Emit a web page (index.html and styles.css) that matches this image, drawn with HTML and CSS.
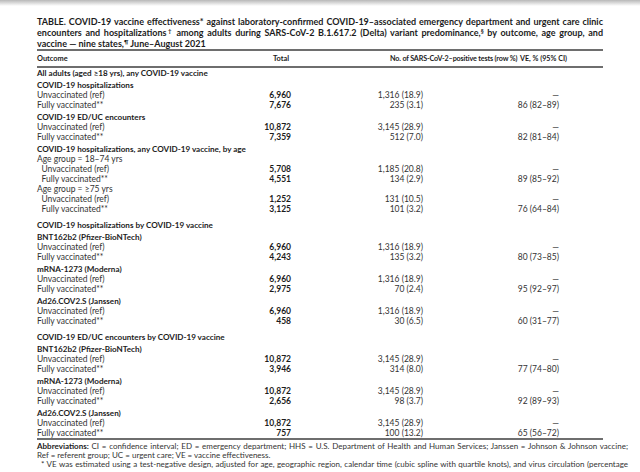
FILE: index.html
```html
<!DOCTYPE html>
<html lang="en">
<head>
<meta charset="utf-8">
<title>COVID-19 vaccine effectiveness table</title>
<link rel="stylesheet" href="styles.css">
</head>
<body>
<div class="page">
  <div class="title">
    <div class="tl j">TABLE. COVID-19 vaccine effectiveness* against laboratory-confirmed COVID-19–associated emergency department and urgent care clinic</div>
    <div class="tl j">encounters and hospitalizations<sup>†</sup> among adults during SARS-CoV-2 B.1.617.2 (Delta) variant predominance,<sup>§</sup> by outcome, age group, and</div>
    <div class="tl">vaccine — nine states,<sup>¶</sup> June–August 2021</div>
  </div>
  <div class="tbl">
    <div class="row head"><span class="c1">Outcome</span><span class="c2">Total</span><span class="c3">No. of SARS-CoV-2–positive tests (row %)</span><span class="c4">VE, % (95% CI)</span></div>
    <div class="row b"><span class="c1">All adults (aged ≥18 yrs), any COVID-19 vaccine</span></div>
    <div class="row b sub"><span class="c1">COVID-19 hospitalizations</span></div>
    <div class="row"><span class="c1">Unvaccinated (ref)</span><span class="c2">6,960</span><span class="c3">1,316 (18.9)</span><span class="c4">—</span></div>
    <div class="row"><span class="c1">Fully vaccinated**</span><span class="c2">7,676</span><span class="c3">235 (3.1)</span><span class="c4">86 (82–89)</span></div>
    <div class="row b sub"><span class="c1">COVID-19 ED/UC encounters</span></div>
    <div class="row"><span class="c1">Unvaccinated (ref)</span><span class="c2">10,872</span><span class="c3">3,145 (28.9)</span><span class="c4">—</span></div>
    <div class="row"><span class="c1">Fully vaccinated**</span><span class="c2">7,359</span><span class="c3">512 (7.0)</span><span class="c4">82 (81–84)</span></div>
    <div class="row b sub"><span class="c1">COVID-19 hospitalizations, any COVID-19 vaccine, by age</span></div>
    <div class="row"><span class="c1">Age group = 18–74 yrs</span></div>
    <div class="row ind"><span class="c1">Unvaccinated (ref)</span><span class="c2">5,708</span><span class="c3">1,185 (20.8)</span><span class="c4">—</span></div>
    <div class="row ind"><span class="c1">Fully vaccinated**</span><span class="c2">4,551</span><span class="c3">134 (2.9)</span><span class="c4">89 (85–92)</span></div>
    <div class="row"><span class="c1">Age group = ≥75 yrs</span></div>
    <div class="row ind"><span class="c1">Unvaccinated (ref)</span><span class="c2">1,252</span><span class="c3">131 (10.5)</span><span class="c4">—</span></div>
    <div class="row ind"><span class="c1">Fully vaccinated**</span><span class="c2">3,125</span><span class="c3">101 (3.2)</span><span class="c4">76 (64–84)</span></div>
    <div class="row b sec"><span class="c1">COVID-19 hospitalizations by COVID-19 vaccine</span></div>
    <div class="row b vac"><span class="c1">BNT162b2 (Pfizer-BioNTech)</span></div>
    <div class="row"><span class="c1">Unvaccinated (ref)</span><span class="c2">6,960</span><span class="c3">1,316 (18.9)</span><span class="c4">—</span></div>
    <div class="row"><span class="c1">Fully vaccinated**</span><span class="c2">4,243</span><span class="c3">135 (3.2)</span><span class="c4">80 (73–85)</span></div>
    <div class="row b vac"><span class="c1">mRNA-1273 (Moderna)</span></div>
    <div class="row"><span class="c1">Unvaccinated (ref)</span><span class="c2">6,960</span><span class="c3">1,316 (18.9)</span><span class="c4">—</span></div>
    <div class="row"><span class="c1">Fully vaccinated**</span><span class="c2">2,975</span><span class="c3">70 (2.4)</span><span class="c4">95 (92–97)</span></div>
    <div class="row b vac"><span class="c1">Ad26.COV2.S (Janssen)</span></div>
    <div class="row"><span class="c1">Unvaccinated (ref)</span><span class="c2">6,960</span><span class="c3">1,316 (18.9)</span><span class="c4">—</span></div>
    <div class="row"><span class="c1">Fully vaccinated**</span><span class="c2">458</span><span class="c3">30 (6.5)</span><span class="c4">60 (31–77)</span></div>
    <div class="row b sec"><span class="c1">COVID-19 ED/UC encounters by COVID-19 vaccine</span></div>
    <div class="row b vac"><span class="c1">BNT162b2 (Pfizer-BioNTech)</span></div>
    <div class="row"><span class="c1">Unvaccinated (ref)</span><span class="c2">10,872</span><span class="c3">3,145 (28.9)</span><span class="c4">—</span></div>
    <div class="row"><span class="c1">Fully vaccinated**</span><span class="c2">3,946</span><span class="c3">314 (8.0)</span><span class="c4">77 (74–80)</span></div>
    <div class="row b vac"><span class="c1">mRNA-1273 (Moderna)</span></div>
    <div class="row"><span class="c1">Unvaccinated (ref)</span><span class="c2">10,872</span><span class="c3">3,145 (28.9)</span><span class="c4">—</span></div>
    <div class="row"><span class="c1">Fully vaccinated**</span><span class="c2">2,656</span><span class="c3">98 (3.7)</span><span class="c4">92 (89–93)</span></div>
    <div class="row b vac"><span class="c1">Ad26.COV2.S (Janssen)</span></div>
    <div class="row"><span class="c1">Unvaccinated (ref)</span><span class="c2">10,872</span><span class="c3">3,145 (28.9)</span><span class="c4">—</span></div>
    <div class="row"><span class="c1">Fully vaccinated**</span><span class="c2">757</span><span class="c3">100 (13.2)</span><span class="c4">65 (56–72)</span></div>
  </div>
  <div class="foot">
    <div class="fl j"><b>Abbreviations:</b> CI = confidence interval; ED = emergency department; HHS = U.S. Department of Health and Human Services; Janssen = Johnson &amp; Johnson vaccine;</div>
    <div class="fl">Ref = referent group; UC = urgent care; VE = vaccine effectiveness.</div>
    <div class="fl j fn">* VE was estimated using a test-negative design, adjusted for age, geographic region, calendar time (cubic spline with quartile knots), and virus circulation (percentage</div>
  </div>
</div>
</body>
</html>
```

FILE: styles.css
```css
html, body {
  margin: 0;
  padding: 0;
}
body {
  background: #ffffff linear-gradient(#b8b8b8, #ffffff 6px) no-repeat;
  font-family: Lato, "Liberation Sans", sans-serif;
  color: #333333;
}
.page {
  padding: 16px 0 0 37px;
}
.title {
  width: 566px;
  font-weight: 700;
  font-size: 9px;
  line-height: 11px;
  color: #1c1c1c;
}
.tl.j {
  text-align: justify;
  text-align-last: justify;
}
.tl sup {
  font-size: 6px;
  line-height: 0;
  vertical-align: 3px;
}
.tbl {
  width: 566px;
  border-top: 2px solid #6e6e6e;
  border-bottom: 2px solid #6e6e6e;
}
.row {
  display: grid;
  grid-template-columns: 203px 51px 132px 136px 1fr;
  font-size: 8.5px;
  line-height: 10px;
  white-space: nowrap;
}
.row .c2,
.row .c3,
.row .c4 {
  text-align: right;
}
.row .c2 {
  font-weight: 700;
  color: #1c1c1c;
}
.row.head {
  padding: 3px 0 2px;
  border-bottom: 2px solid #6e6e6e;
  font-weight: 700;
  font-size: 7.2px;
  color: #1c1c1c;
}
.row.head .c1 {
  font-size: 7.4px;
}
.row.head .c2 {
  padding-right: 2px;
  font-size: 7.4px;
}
.row.head .c3 {
  text-align: left;
  padding-left: 99px;
  letter-spacing: -0.15px;
}
.row.head .c4 {
  text-align: left;
  padding-left: 97px;
}
.row.b {
  font-weight: 700;
  font-size: 8.1px;
  color: #1c1c1c;
}
.row.sub {
  padding-top: 2px;
}
.row.sec {
  padding-top: 6px;
}
.row.vac {
  padding-top: 2px;
}
.row.ind .c1 {
  padding-left: 4.5px;
}
.foot {
  width: 591px;
  margin-top: 2px;
  font-size: 8px;
  line-height: 9px;
  color: #333333;
}
.fl.j {
  text-align: justify;
  text-align-last: justify;
}
.fl b {
  font-weight: 700;
  color: #1c1c1c;
}
.fn {
  padding-left: 4px;
}
```
